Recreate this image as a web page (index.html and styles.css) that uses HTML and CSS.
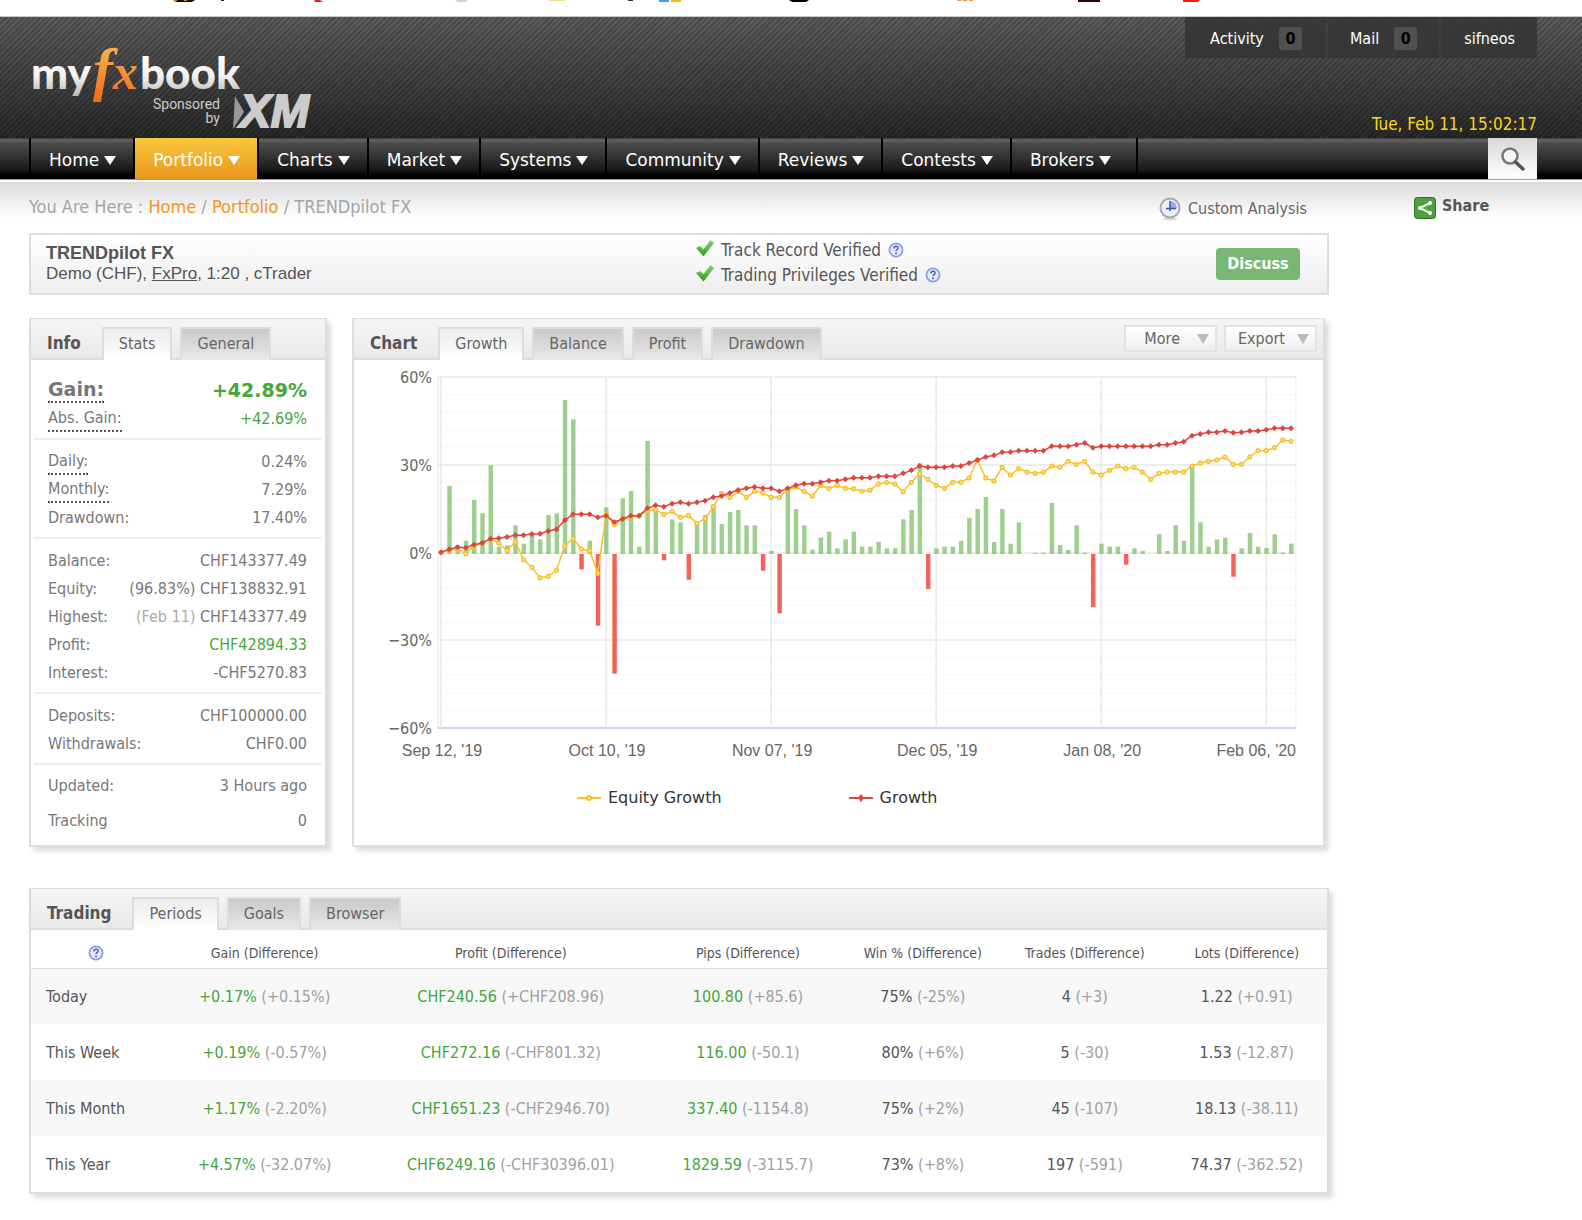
FILE: index.html
```html
<!DOCTYPE html>
<html lang="en">
<head>
<meta charset="utf-8">
<title>TRENDpilot FX - Myfxbook</title>
<meta name="viewport" content="width=device-width, initial-scale=1">
<link rel="stylesheet" href="styles.css">
</head>
<body>
<svg width="0" height="0" class="defs" aria-hidden="true">
  <symbol id="help" viewBox="0 0 16 16">
    <circle cx="8" cy="8" r="6.6" fill="#e4eafb" stroke="#8a9fe6" stroke-width="1.8"/>
    <path d="M5.9 6.4c0-3 4.3-2.8 4.2-.3 0 1.500-2.100 1.500-2.100 3" fill="none" stroke="#4a62b8" stroke-width="1.500"/>
    <circle cx="8" cy="11.300" r="1" fill="#4a62b8"/>
  </symbol>
  <symbol id="check" viewBox="0 0 18 18">
    <linearGradient id="cg" x1="0" y1="0" x2="0" y2="1"><stop offset="0" stop-color="#7fdc62"/><stop offset="1" stop-color="#2f9a25"/></linearGradient>
    <path d="M0 8l4-2 3.400 3.300L14.500 0l3.500 3L7.500 16.500z" fill="url(#cg)"/>
  </symbol>
</svg>

<div class="strip">
  <svg width="1220" height="2" aria-hidden="true">
    <path d="M173 0h22l-3 2h-16z" fill="#111"/><path d="M173 0h4v1h-3z" fill="#e98a30"/><path d="M184 0h3v1h-3z" fill="#e98a30"/>
    <path d="M221 0h3v1h-3z" fill="#225"/><path d="M315 0h5l3 2h-9z" fill="#ee1c25"/><path d="M455 0h13l-3 2h-7z" fill="#d0d0d0"/>
    <path d="M549 0h16v1h-16z" fill="#f3d98b"/><path d="M628 0h5v1h-5z" fill="#2c3350"/><path d="M659 0h10v2h-10z" fill="#3f9fec"/>
    <path d="M671 0h10v2h-10z" fill="#f8b91c"/><path d="M789 0h20l-3 2h-14z" fill="#000"/><path d="M957 0h4v1h-4zM963 0h4v1h-4zM969 0h4v1h-4z" fill="#f0924a"/>
    <path d="M1078 0h22v2h-22z" fill="#2b0508"/><path d="M1183 0h17l-2 2h-15z" fill="#f02015"/>
  </svg>
</div>

<header class="banner">
  <a class="logo" href="#" aria-label="myfxbook, sponsored by XM">
    <svg width="300" height="121" viewBox="0 -6 300 121">
      <defs>
        <linearGradient id="lw" gradientUnits="userSpaceOnUse" x1="0" y1="30" x2="0" y2="72"><stop offset="0" stop-color="#fff"/><stop offset=".55" stop-color="#f2f2f2"/><stop offset="1" stop-color="#bbb"/></linearGradient>
        <linearGradient id="lo" gradientUnits="userSpaceOnUse" x1="0" y1="22" x2="0" y2="78"><stop offset="0" stop-color="#f7b455"/><stop offset="1" stop-color="#f26a1b"/></linearGradient>
      </defs>
      <text x="-1" y="66" class="logo-word" fill="url(#lw)">my</text>
      <text x="61" y="66" fill="url(#lo)"><tspan class="logo-f">f</tspan><tspan class="logo-x">x</tspan></text>
      <text x="108" y="66" class="logo-word" fill="url(#lw)">book</text>
      <text x="188" y="86" class="logo-note" text-anchor="end">Sponsored</text>
      <text x="188" y="100" class="logo-note" text-anchor="end">by</text>
      <path d="M203 73l9 16-11 17z" fill="#999"/>
      <text x="208" y="104" class="logo-xm">XM</text>
    </svg>
  </a>
  <div class="account">
    <ul class="tools">
      <li><a href="#">Activity <span class="count">0</span></a></li>
      <li><a href="#">Mail <span class="count">0</span></a></li>
      <li><a href="#">sifneos</a></li>
    </ul>
    <time class="clock">Tue, Feb 11, 15:02:17</time>
  </div>
</header>

<nav class="menu">
  <ul>
    <li><a href="#">Home <i class="arrow"></i></a></li>
    <li><a href="#" class="current">Portfolio <i class="arrow"></i></a></li>
    <li><a href="#">Charts <i class="arrow"></i></a></li>
    <li><a href="#">Market <i class="arrow"></i></a></li>
    <li><a href="#">Systems <i class="arrow"></i></a></li>
    <li><a href="#">Community <i class="arrow"></i></a></li>
    <li><a href="#">Reviews <i class="arrow"></i></a></li>
    <li><a href="#">Contests <i class="arrow"></i></a></li>
    <li><a href="#">Brokers <i class="arrow"></i></a></li>
  </ul>
  <button class="search" aria-label="Search">
    <svg width="26" height="26" viewBox="0 0 26 26"><circle cx="10" cy="10" r="7.500" fill="#f4f4f4" stroke="#777" stroke-width="2.500"/><path d="M15.500 16l7.500 7" stroke="#555" stroke-width="3.500" stroke-linecap="round"/></svg>
  </button>
</nav>

<div class="page">
  <div class="crumbs">
    <p>You Are Here : <a href="#">Home</a> / <a href="#">Portfolio</a> / TRENDpilot FX</p>
    <a class="analysis" href="#">
      <svg width="22" height="24" viewBox="0 0 22 24"><ellipse cx="11" cy="22" rx="8" ry="1.500" fill="#ddd"/><circle cx="11" cy="11" r="9.500" fill="#e9f0f4" stroke="#a4aaae" stroke-width="2"/><path d="M11 4a7 7 0 0 1 7 7h-7z" fill="#93aef0"/><path d="M11 4v10M7 11.500h10" stroke="#3b55a8" stroke-width="1.500"/></svg>
      Custom Analysis</a>
  </div>
  <a class="share" href="#">
    <svg width="22" height="22" viewBox="0 0 22 22"><rect x=".5" y=".5" width="21" height="21" rx="3" fill="#4da03c" stroke="#2f6e27"/><path d="M16 6L6 11l10 5" fill="none" stroke="#e6f5df" stroke-width="2"/><circle cx="16" cy="6" r="2" fill="#fff"/><circle cx="6" cy="11" r="2" fill="#fff"/><circle cx="16" cy="16" r="2" fill="#fff"/></svg>
    Share</a>

  <main>
    <section class="summary">
      <div class="system">
        <h1>TRENDpilot FX</h1>
        <p>Demo (CHF), <a href="#">FxPro</a>, 1:20 , cTrader</p>
      </div>
      <ul class="verified">
        <li><svg class="check"><use href="#check"/></svg>Track Record Verified <svg class="help"><use href="#help"/></svg></li>
        <li><svg class="check"><use href="#check"/></svg>Trading Privileges Verified <svg class="help"><use href="#help"/></svg></li>
      </ul>
      <button class="discuss">Discuss</button>
    </section>

    <div class="columns">
      <section class="panel info">
        <div class="panel-head"><h2>Info</h2><button class="tab on">Stats</button><button class="tab">General</button></div>
        <dl class="group first">
          <div class="gain"><dt><span class="dotted">Gain:</span></dt><dd class="pos">+42.89%</dd></div>
          <div><dt><span class="dotted">Abs. Gain:</span></dt><dd class="pos">+42.69%</dd></div>
        </dl>
        <dl class="group">
          <div><dt><span class="dotted">Daily:</span></dt><dd>0.24%</dd></div>
          <div><dt><span class="dotted">Monthly:</span></dt><dd>7.29%</dd></div>
          <div><dt>Drawdown:</dt><dd>17.40%</dd></div>
        </dl>
        <dl class="group">
          <div><dt>Balance:</dt><dd>CHF143377.49</dd></div>
          <div><dt>Equity:</dt><dd>(96.83%) CHF138832.91</dd></div>
          <div><dt>Highest:</dt><dd><span class="faint">(Feb 11)</span> CHF143377.49</dd></div>
          <div><dt>Profit:</dt><dd class="pos">CHF42894.33</dd></div>
          <div><dt>Interest:</dt><dd>-CHF5270.83</dd></div>
        </dl>
        <dl class="group">
          <div><dt>Deposits:</dt><dd>CHF100000.00</dd></div>
          <div><dt>Withdrawals:</dt><dd>CHF0.00</dd></div>
        </dl>
        <dl class="group last">
          <div><dt>Updated:</dt><dd>3 Hours ago</dd></div>
          <div><dt>Tracking</dt><dd>0</dd></div>
        </dl>
      </section>

      <section class="panel chart">
        <div class="panel-head">
          <h2>Chart</h2><button class="tab on">Growth</button><button class="tab">Balance</button><button class="tab">Profit</button><button class="tab">Drawdown</button>
          <div class="actions"><button class="drop">More <i class="arrow"></i></button><button class="drop">Export <i class="arrow"></i></button></div>
        </div>
        <svg id="plot" class="plot" role="img" aria-label="Growth chart"></svg>
        <div class="legend">
          <span><svg width="24" height="10"><path d="M0 5h24" stroke="#f7c02c" stroke-width="2"/><circle cx="12" cy="5" r="2" fill="#fff" stroke="#f7c02c" stroke-width="2"/></svg>Equity Growth</span>
          <span><svg width="24" height="10"><path d="M0 5h24" stroke="#e0453c" stroke-width="2"/><path d="M12 1l3 4-3 4-3-4z" fill="#e0453c"/></svg>Growth</span>
        </div>
      </section>
    </div>

    <section class="panel trading">
      <div class="panel-head"><h2>Trading</h2><button class="tab on">Periods</button><button class="tab">Goals</button><button class="tab">Browser</button></div>
      <table>
        <colgroup><col class="c1"><col class="c2"><col class="c3"><col class="c4"><col class="c5"><col class="c6"><col class="c7"></colgroup>
        <thead><tr><th aria-label="Period"><svg class="help"><use href="#help"/></svg></th><th>Gain (Difference)</th><th>Profit (Difference)</th><th>Pips (Difference)</th><th>Win % (Difference)</th><th>Trades (Difference)</th><th>Lots (Difference)</th></tr></thead>
        <tbody>
          <tr><th>Today</th><td><b>+0.17%</b> (+0.15%)</td><td><b>CHF240.56</b> (+CHF208.96)</td><td><b>100.80</b> (+85.6)</td><td><em>75%</em> (-25%)</td><td><em>4</em> (+3)</td><td><em>1.22</em> (+0.91)</td></tr>
          <tr><th>This Week</th><td><b>+0.19%</b> (-0.57%)</td><td><b>CHF272.16</b> (-CHF801.32)</td><td><b>116.00</b> (-50.1)</td><td><em>80%</em> (+6%)</td><td><em>5</em> (-30)</td><td><em>1.53</em> (-12.87)</td></tr>
          <tr><th>This Month</th><td><b>+1.17%</b> (-2.20%)</td><td><b>CHF1651.23</b> (-CHF2946.70)</td><td><b>337.40</b> (-1154.8)</td><td><em>75%</em> (+2%)</td><td><em>45</em> (-107)</td><td><em>18.13</em> (-38.11)</td></tr>
          <tr><th>This Year</th><td><b>+4.57%</b> (-32.07%)</td><td><b>CHF6249.16</b> (-CHF30396.01)</td><td><b>1829.59</b> (-3115.7)</td><td><em>73%</em> (+8%)</td><td><em>197</em> (-591)</td><td><em>74.37</em> (-362.52)</td></tr>
        </tbody>
      </table>
    </section>
  </main>
</div>
<script src="chart.js"></script>
</body>
</html>
```
FILE: styles.css
```css
* { box-sizing: border-box; }
body { margin: 0; background: #fff; color: #555; font: 16px/24px "DejaVu Sans Condensed", "Noto Sans", Tahoma, sans-serif; }
h1, h2, p, ul, dl, dd { margin: 0; padding: 0; }
ul { list-style: none; }
a { color: inherit; text-decoration: none; }
button { font: inherit; color: inherit; cursor: pointer; margin: 0; }
svg { display: block; }
.defs { position: absolute; }

.strip { height: 17px; border-bottom: 1px solid #c9c9cf; overflow: hidden; }

/* Banner */
.banner { display: flex; justify-content: space-between; height: 121px; padding: 0 45px 0 32px; color: #fff;
  background: repeating-linear-gradient(135deg, rgba(0,0,0,.2) 0 2px, transparent 2px 4px), linear-gradient(#5e5e5e, #292929); }
.logo-word { font: 900 44px Lato, "DejaVu Sans", sans-serif; }
.logo-f { font: italic bold 60px "Liberation Serif", serif; }
.logo-x { font: italic bold 50px "Liberation Serif", serif; }
.logo-note { font: 14px Roboto, sans-serif; fill: #ccc; }
.logo-xm { font: italic bold 46px "Liberation Sans", sans-serif; fill: #ccc; stroke: #ccc; stroke-width: 2px; }
.account { display: flex; flex-direction: column; justify-content: space-between; align-items: flex-end; }
.tools { display: flex; background: rgba(52,52,52,.85); }
.tools li + li { border-left: 3px solid rgba(70,70,70,.5); }
.tools a { display: flex; align-items: center; gap: 15px; height: 41px; padding: 2px 23px 0 25px; }
.tools li + li a { padding: 2px 22px 0; }
.count { width: 23px; height: 23px; border-radius: 3px; background: #505050; color: #000; font-weight: bold; line-height: 23px; text-align: center; }
.clock { color: #fbd323; font-size: 17px; line-height: 28px; }

/* Main menu */
.menu { display: flex; justify-content: space-between; height: 42px; padding: 0 45px 0 29px; border-bottom: 1px solid #999;
  background: linear-gradient(#3a3a3a, #666 2px, #4c4c4c 5px, #1d1d1d 30px, #000 38px); color: #fff; }
.menu ul { display: flex; border-left: 2px solid #000; }
.menu li { border-right: 2px solid #000; }
.menu a { display: flex; align-items: center; gap: 5px; height: 41px; padding: 2px 17px 0 18px; font-family: "DejaVu Sans", Verdana, sans-serif; font-size: 17px; }
.menu li:last-child a { padding-right: 25px; }
.menu .current { background: linear-gradient(#f9c93f, #ea951c); }
.arrow { border: solid transparent; border-width: 9px 6px 0; border-top-color: currentColor; }
.menu .arrow { margin-top: 2px; }
.search { display: flex; align-items: center; justify-content: center; width: 49px; height: 41px; padding: 0; border: 0; background: linear-gradient(#d8d8d8, #fff); }

/* Page grid: content on the left, share column on the right */
.page { display: grid; grid-template-columns: minmax(0, 1fr) 168px; column-gap: 85px; padding: 0 0 25px 29px; border-top: 2px solid #fff;
  background: linear-gradient(#dadada, #fff 36px) no-repeat; }
.crumbs { display: flex; justify-content: space-between; height: 51px; padding: 13px 22px 0 0; color: #a4a4a4; }
.crumbs p { font-size: 18px; }
.crumbs p a { color: #f7941e; }
.analysis { display: flex; gap: 7px; height: 24px; margin-top: 2px; color: #666; }
.share { display: flex; gap: 6px; height: 24px; margin-top: 12px; color: #555; font-weight: bold; }
.share svg { margin-top: 3px; }

.summary { display: grid; grid-template-columns: 50% 1fr auto; height: 62px; padding: 0 27px 0 15px; border: 2px solid #ddd; background: linear-gradient(#fff, #eee); }
.system { padding-top: 8px; }
.summary h1 { font: bold 18px/21px "Liberation Sans", Arial, sans-serif; }
.system p { font: 17px/20px "Liberation Sans", Arial, sans-serif; }
.system a { text-decoration: underline; }
.verified { padding: 2px 0 0 23px; }
.verified li { display: flex; align-items: center; gap: 7px; height: 25px; font-size: 17px; }
.check { width: 18px; height: 18px; margin-bottom: 2px; }
.help { width: 16px; height: 16px; }
.discuss { align-self: center; width: 84px; height: 32px; padding: 0; border: 0; border-radius: 4px; background: #78b874; color: #fff; font-weight: bold; }

/* Panels */
.panel { border: 2px solid #ddd; border-top-width: 1px; background: #fff; box-shadow: 4px 4px 5px #ddd; }
.panel-head { display: flex; align-items: flex-end; gap: 8px; height: 41px; padding-left: 16px; border-bottom: 2px solid #ddd; background: linear-gradient(#f5f5f5, #e9e9e9); }
.panel-head h2 { margin-right: 13px; font-size: 17px; line-height: 30px; }
.tab { height: 33px; margin-bottom: -2px; padding: 0 15px 1px; border: 2px solid #ddd; border-bottom: 0; background: linear-gradient(#c9c9c9, #e9e9e9); color: #666; }
.tab.on { background: linear-gradient(#ececec, #fff); }
.columns { display: grid; grid-template-columns: 298px minmax(0, 1fr); gap: 25px; margin: 23px 4px 41px 0; }

.group { margin: 0 3px; padding: 8px 15px 5px 14px; border-bottom: 2px solid #eee; color: #777; }
.group div { display: flex; justify-content: space-between; align-items: center; height: 28px; }
.group.first { padding-top: 15px; }
.group .gain { height: 30px; font: bold 19px/24px "DejaVu Sans", Verdana, sans-serif; }
.group.last { padding-top: 3px; border: 0; }
.group.last div { height: 35px; }
.dotted { display: block; border-bottom: 2px dotted #555; }
.pos { color: #46a63b; }
.faint { color: #aaa; }

.actions { display: flex; gap: 7px; margin: 0 6px 6px auto; }
.drop { display: flex; align-items: center; justify-content: flex-end; gap: 17px; width: 93px; height: 27px; padding: 0 6px; border: 2px solid #e3e3e3; background: linear-gradient(#fff, #eee); color: #666; }
.drop:last-child { gap: 12px; }
.drop .arrow { border-top-color: #bbb; border-top-width: 10px; }
.plot { width: 100%; height: 405px; }
.plot text { fill: #666; font-size: 16px; }
.plot .date { font-family: "Liberation Sans", Arial, sans-serif; }
.legend { display: flex; gap: 127px; padding: 21px 0 35px 223px; color: #333; font-family: "DejaVu Sans", Verdana, sans-serif; }
.legend span { display: flex; align-items: center; gap: 7px; }

table { width: 100%; border-collapse: collapse; table-layout: fixed; color: #a0a0a0; text-align: center; }
th, td { padding: 2px 0 0; font-weight: normal; }
thead th { height: 38px; padding-top: 8px; border-bottom: 1px solid #ddd; font-size: 14px; color: #555; }
th:nth-child(n+4), td:nth-child(n+4) { padding-right: 5px; }
thead .help { margin: auto; }
tbody tr { height: 56px; }
tbody tr:nth-child(odd) { background: #f7f7f7; }
tbody th { padding-left: 15px; text-align: left; color: #555; }
td b { font-weight: normal; color: #46a63b; }
td em { font-style: normal; color: #555; }
.c1 { width: 130px; } .c2 { width: 16%; } .c3 { width: 22%; } .c4 { width: 15%; } .c5 { width: 12%; } .c6 { width: 13%; } .c7 { width: 12%; }
```
FILE: chart.js
```js
// Levels are measured downwards on a scale of 1053 steps; 582 is the zero line.
const ZERO = 582;
const growth = [577,568,562,563,554,549,536,535,531,526,526,522,521,513,508,481,463,463,463,472,467,486,477,467,467,445,436,440,431,427,431,427,422,412,408,399,390,385,381,385,385,394,385,376,371,371,367,362,362,358,353,353,353,349,349,349,340,331,318,322,322,322,318,318,309,300,291,286,277,276,272,272,272,272,259,259,259,254,249,263,259,259,259,259,259,259,259,254,254,249,245,227,222,217,217,213,218,217,213,213,209,205,205,205];
const equity = [577,571,568,581,558,549,537,549,572,545,599,622,653,649,631,558,536,567,572,640,463,494,477,470,467,453,449,463,454,472,467,490,476,440,400,412,394,412,394,399,412,412,390,381,394,408,377,385,376,385,386,394,390,372,367,372,395,367,341,358,376,385,367,367,354,300,354,363,322,345,326,336,340,336,318,322,304,313,304,336,345,331,318,326,322,336,358,340,336,336,336,318,309,304,300,291,313,313,291,272,272,263,240,244];
const bars = [582,378,556,542,420,460,316,560,556,496,551,525,538,465,460,120,178,628,542,797,442,941,415,393,560,243,447,601,478,487,659,487,465,433,492,456,450,496,496,632,573,760,390,447,496,569,532,515,565,538,515,560,560,546,565,565,478,450,310,687,565,560,560,542,474,447,411,546,447,551,487,582,578,578,429,555,570,496,578,741,551,560,560,614,565,573,582,523,573,496,542,324,487,560,538,533,650,565,519,560,564,523,578,551];
const dates = ["Sep 12, '19", "Oct 10, '19", "Nov 07, '19", "Dec 05, '19", "Jan 08, '20", "Feb 06, '20"];

const svg = document.getElementById("plot");

function draw() {
  const left = 84, top = 17, right = svg.clientWidth - 27;
  const first = left + 3, step = (right - 5 - first) / (growth.length - 1);
  const x = i => first + i * step;
  const y = v => top + (v - 51) / 3;
  const line = (x1, y1, x2, y2, c, w) => `<path d="M${x1} ${y1}L${x2} ${y2}" stroke="${c}" stroke-width="${w}"/>`;
  let out = "";
  for (let k = 0; k <= 20; k++) {
    const yy = Math.round(top + k * 351 / 20);
    if (k % 5) out += line(left, yy, right, yy, "#f7f7f7", 1);
    else out += line(left, yy, right, yy, k === 20 ? "#ccd6eb" : "#e8e8e8", k === 20 ? 2 : 1.5);
  }
  out += line(left, top, left, top + 351, "#e8e8e8", 1) + line(right, top, right, top + 351, "#e8e8e8", 1);
  dates.forEach((d, n) => {
    const px = x(n * 20);
    out += line(px, top, px, top + 351, "#e8e8e8", 1.5);
    const end = n === dates.length - 1;
    out += `<text class="date" x="${end ? right : px + 1}" y="${top + 379}" text-anchor="${end ? "end" : "middle"}">${d}</text>`;
  });
  ["60%", "30%", "0%", "−30%", "−60%"].forEach((t, n) => {
    out += `<text x="${left - 6}" y="${Math.round(top + n * 351 / 4) + 6}" text-anchor="end">${t}</text>`;
  });
  bars.forEach((v, i) => {
    if (v === ZERO) return;
    const up = v < ZERO;
    out += `<rect x="${x(i) - 2}" y="${y(Math.min(v, ZERO))}" width="4.500" height="${Math.abs(v - ZERO) / 3}" fill="${up ? "#7fbf6a" : "#f0483e"}" fill-opacity="${up ? .75 : .85}"/>`;
  });
  const poly = (a, c) => `<polyline points="${a.map((v, i) => x(i) + "," + y(v)).join(" ")}" fill="none" stroke="${c}" stroke-width="1.500"/>`;
  out += poly(equity, "#f7c02c");
  equity.forEach((v, i) => { out += `<circle cx="${x(i)}" cy="${y(v)}" r="1.800" fill="#fde9a8" stroke="#f7c02c" stroke-width="1.500"/>`; });
  out += poly(growth, "#e0453c");
  growth.forEach((v, i) => { out += `<path d="M${x(i)} ${y(v) - 3}l3 3-3 3-3-3z" fill="#e0453c"/>`; });
  svg.innerHTML = out;
}
draw();
addEventListener("resize", draw);
```
